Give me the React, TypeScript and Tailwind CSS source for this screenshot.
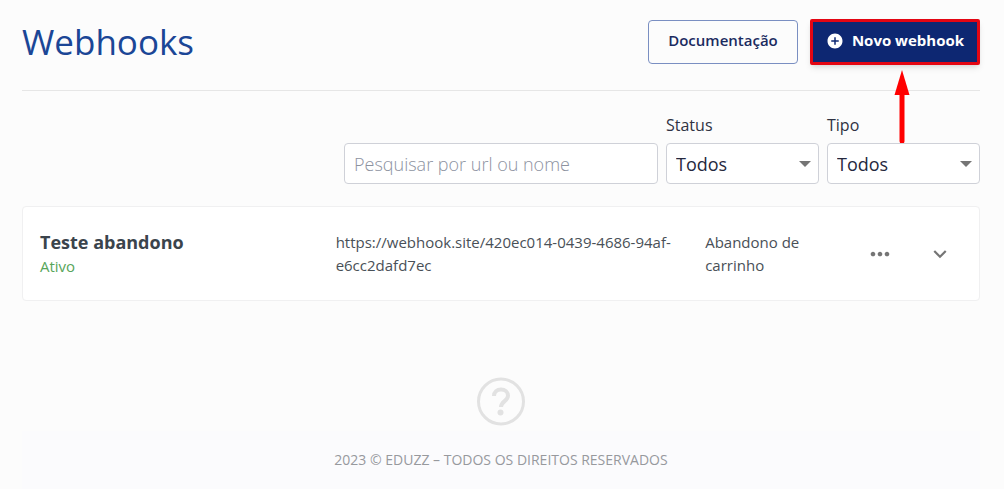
import React, { useState } from "react";
import { MdAddCircle, MdExpandMore, MdMoreHoriz } from "react-icons/md";

type Webhook = {
  name: string;
  status: string;
  url: string;
  type: string;
};

const webhooks: Webhook[] = [
  {
    name: "Teste abandono",
    status: "Ativo",
    url: "https://webhook.site/420ec014-0439-4686-94af-e6cc2dafd7ec",
    type: "Abandono de carrinho",
  },
];

type FilterSelectProps = {
  id: string;
  label: string;
  options: string[];
};

const FilterSelect: React.FC<FilterSelectProps> = ({ id, label, options }) => {
  const [value, setValue] = useState(options[0]);

  return (
    <div className="flex w-[153px] flex-col gap-1.5">
      <label htmlFor={id} className="text-base text-[#2f3242]">
        {label}
      </label>
      <div className="relative">
        <select
          id={id}
          value={value}
          onChange={(e) => setValue(e.target.value)}
          className="h-[41px] w-full appearance-none rounded border border-[#cfd1d8] bg-white px-[9px] text-lg text-[#25283d]"
        >
          {options.map((option) => (
            <option key={option}>{option}</option>
          ))}
        </select>
        <svg
          className="pointer-events-none absolute top-[18px] right-2 h-1.5 w-3"
          viewBox="0 0 12 6"
          fill="#757575"
        >
          <path d="M0 0h12L6 6z" />
        </svg>
      </div>
    </div>
  );
};

const WebhookCard: React.FC<{ webhook: Webhook }> = ({ webhook }) => {
  return (
    <li className="grid grid-cols-[296fr_370fr_145fr_60px_60px] items-center rounded border border-[#f0f0f1] bg-white py-[22px] pr-[9px] pl-[17px]">
      <div>
        <h2 className="text-lg leading-[26px] font-bold text-[#3b444c]">
          {webhook.name}
        </h2>
        <p className="text-[15px] leading-[23px] text-[#57a55a]">
          {webhook.status}
        </p>
      </div>
      <p className="pr-5 text-[15px] leading-[23px] break-words text-[#495057]">
        {webhook.url}
      </p>
      <p className="pr-8 text-[15px] leading-[23px] text-[#495057]">
        {webhook.type}
      </p>
      <button
        type="button"
        aria-label="Mais opções"
        className="flex justify-center text-[#757575]"
      >
        <MdMoreHoriz size={28} />
      </button>
      <button
        type="button"
        aria-label="Expandir"
        className="flex justify-center text-[#757575]"
      >
        <MdExpandMore size={26} />
      </button>
    </li>
  );
};

const App: React.FC = () => {
  return (
    <div className="flex min-h-screen flex-col bg-[#fcfcfc] pr-6 pl-[22px] font-['Open_Sans',sans-serif]">
      <header className="flex items-center justify-between border-b border-[#e6e6e6] pt-[19px] pb-[25px]">
        <h1 className="text-[35px] leading-10 text-[#1b4696]">Webhooks</h1>
        <div className="flex items-center gap-3">
          <button
            type="button"
            className="h-11 w-[150px] rounded border border-[#7a8fc2] pb-[3px] text-[15px] font-semibold text-[#1b2b60]"
          >
            Documentação
          </button>
          <div className="relative">
            <button
              type="button"
              className="flex h-[46px] w-[170px] items-center justify-center gap-2 rounded-xs border-3 border-[#e30613] bg-[#0d2772] pb-[3px] text-[15px] font-bold text-white shadow-md"
            >
              <MdAddCircle size={18} />
              Novo webhook
            </button>
            <svg
              className="absolute top-[51px] left-[84px] h-[74px] w-4"
              viewBox="0 0 16 74"
            >
              <path d="M8 20v51" stroke="#ff0000" strokeWidth="5" strokeLinecap="round" />
              <path d="M8 0l7.5 25h-15z" fill="#ff0000" />
            </svg>
          </div>
        </div>
      </header>

      <form className="flex items-end justify-end gap-2 pt-[22px]">
        <input
          type="text"
          aria-label="Pesquisar por url ou nome"
          placeholder="Pesquisar por url ou nome"
          className="h-[41px] w-[314px] rounded border border-[#cfd1d8] bg-white px-[9px] text-lg text-[#25283d] placeholder:font-light placeholder:text-[#8d929f]"
        />
        <FilterSelect id="status" label="Status" options={["Todos", "Ativo", "Inativo"]} />
        <FilterSelect id="tipo" label="Tipo" options={["Todos", "Abandono de carrinho"]} />
      </form>

      <ul className="mt-[22px]">
        {webhooks.map((webhook) => (
          <WebhookCard key={webhook.url} webhook={webhook} />
        ))}
      </ul>

      <div className="flex justify-center pt-[76px] pb-[5px]">
        <svg className="h-[49px] w-12" viewBox="0 0 48 49" fill="none" stroke="#e2e2e2">
          <circle cx="24" cy="24.5" r="22.5" strokeWidth="3" />
          <path
            d="M17 19c0-4 3-6.500 7-6.500s7 2.600 7 6.200c0 5.300-7 5.600-7 11.300"
            strokeWidth="4"
          />
          <circle cx="23.500" cy="35.500" r="3" fill="#e2e2e2" stroke="none" />
        </svg>
      </div>

      <footer className="flex-1 bg-[#fbfbfd] pt-[19px] text-center text-sm text-[#97999d]">
        2023 © EDUZZ – TODOS OS DIREITOS RESERVADOS
      </footer>
    </div>
  );
};

export default App;
